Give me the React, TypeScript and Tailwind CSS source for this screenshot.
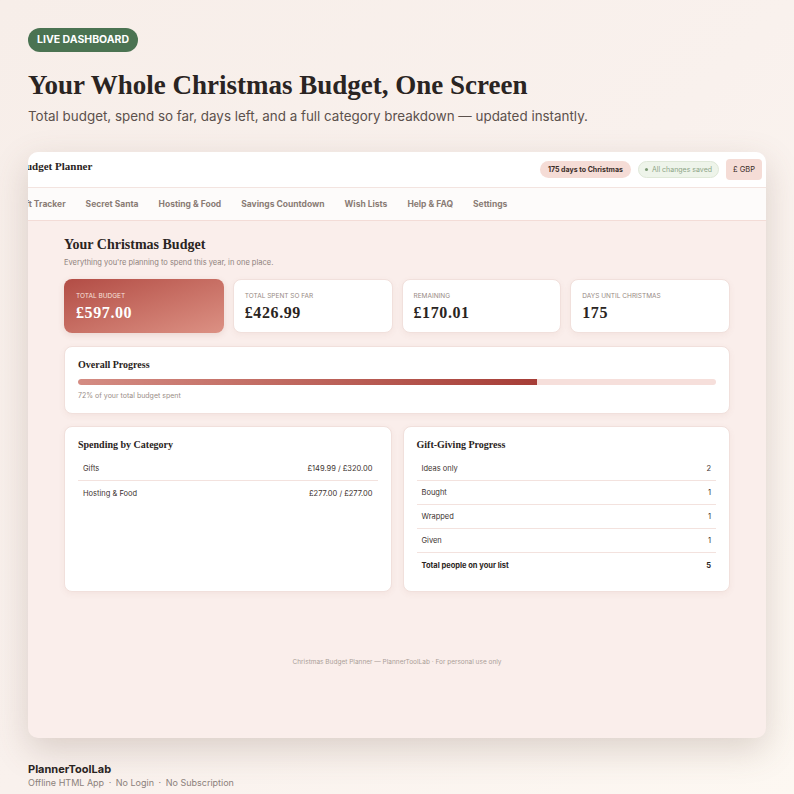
const serif = "font-['Liberation_Serif','DejaVu_Serif',serif]"
const sans = "font-['Inter','Lato',sans-serif]"

const navItems = ["Gift Tracker", "Secret Santa", "Hosting & Food", "Savings Countdown", "Wish Lists", "Help & FAQ", "Settings"]

const stats = [
    { label: "Total spent so far", value: "£426.99" },
    { label: "Remaining", value: "£170.01" },
    { label: "Days until Christmas", value: "175" },
]

const categories = [
    { name: "Gifts", amount: "£149.99 / £320.00" },
    { name: "Hosting & Food", amount: "£277.00 / £277.00" },
]

const giftStatus = [
    { name: "Ideas only", count: 2 },
    { name: "Bought", count: 1 },
    { name: "Wrapped", count: 1 },
    { name: "Given", count: 1 },
]

export default function App() {
    const spentPct = 72

    return (
        <div className={`${sans} w-[794px] h-[794px] overflow-hidden bg-gradient-to-br from-[#f7eee9] via-[#f9f1ed] to-[#fdf8f2] px-7 pt-7 text-[#2b2522]`}>
            {/* Intro */}
            <div className="flex h-6 w-fit items-center rounded-full bg-[#4b7352] px-[9px] text-[10.5px] font-bold text-white">
                LIVE DASHBOARD
            </div>
            <h1 className={`${serif} mt-[16px] text-[27px] font-bold leading-[34px] text-[#2a2422]`}>
                Your Whole Christmas Budget, One Screen
            </h1>
            <p className="mt-[4px] text-[13.4px] leading-5 text-[#5c514c]">
                Total budget, spend so far, days left, and a full category breakdown — updated instantly.
            </p>

            {/* App preview */}
            <div className="mt-[26px] h-[586px] w-[738px] overflow-hidden rounded-[10px] bg-[#faeeeb] shadow-[0_12px_34px_rgba(110,80,70,0.22)]">
                <header className="flex h-9 items-center justify-between border-b border-[#f3e4e0] bg-white pr-1">
                    <div className="-ml-[61px] flex flex-col">
                        <span className={`${serif} text-[11px] font-bold leading-3 text-[#2a2422]`}>Christmas Budget Planner</span>
                        <span className="text-[5px] leading-[8px] text-[#9a8d87]">by PlannerToolLab</span>
                    </div>
                    <div className="flex items-center gap-[7px]">
                        <span className="rounded-full bg-[#f5dcd6] px-[8px] py-[4px] text-[7px] font-bold leading-[9px] text-[#3a2c28]">
                            175 days to Christmas
                        </span>
                        <span className="flex items-center gap-[4px] rounded-full border border-[#dfe8d8] bg-[#eef4ea] px-[6px] py-[3px] text-[7px] leading-[9px] text-[#8da487]">
                            <span className="h-[3px] w-[3px] rounded-full bg-[#7d9a76]" />
                            All changes saved
                        </span>
                        <span className="rounded-[4px] bg-[#f5dcd6] px-[7px] py-[6px] text-[7.5px] leading-[9px] text-[#3a2c28]">
                            £ GBP
                        </span>
                    </div>
                </header>

                <nav className="flex h-[33px] items-center gap-[20px] border-b border-[#f3dcd7] bg-[#fdfbfa] text-[8.5px] font-bold text-[#8a7c75]">
                    <span className="-ml-[11px]">Gift Tracker</span>
                    {navItems.slice(1).map((item) => (
                        <span key={item}>{item}</span>
                    ))}
                </nav>

                <main className="px-9 pt-4">
                    <h2 className={`${serif} text-[14px] font-bold leading-4 text-[#2a2422]`}>Your Christmas Budget</h2>
                    <p className="mt-[4px] text-[7.5px] text-[#8f827c]">Everything you're planning to spend this year, in one place.</p>

                    {/* Stat cards */}
                    <div className="mt-[11px] grid grid-cols-4 gap-[9px]">
                        <div className="flex h-[54px] flex-col justify-center rounded-[8px] bg-gradient-to-br from-[#b24c45] to-[#dc9184] px-[12px] text-white shadow-[0_2px_6px_rgba(150,80,70,0.15)]">
                            <span className="text-[6.5px] uppercase leading-[8px] text-[#f8e1dc]">Total budget</span>
                            <span className={`${serif} mt-[5px] text-[16px] font-bold leading-[16px] tracking-[0.6px]`}>£597.00</span>
                        </div>
                        {stats.map((s) => (
                            <div key={s.label} className="flex h-[54px] flex-col justify-center rounded-[8px] border border-[#f1e0dc] bg-white px-[11px] shadow-[0_2px_6px_rgba(150,100,90,0.07)]">
                                <span className="text-[6.5px] uppercase leading-[8px] text-[#978a84]">{s.label}</span>
                                <span className={`${serif} mt-[5px] text-[16px] font-bold leading-[16px] tracking-[0.6px] text-[#2a2422]`}>{s.value}</span>
                            </div>
                        ))}
                    </div>

                    {/* Overall progress */}
                    <div className="mt-[13px] h-[68px] rounded-[8px] border border-[#f1e0dc] bg-white px-[13px] pt-[12px] shadow-[0_2px_6px_rgba(150,100,90,0.07)]">
                        <h3 className={`${serif} text-[10px] font-bold leading-3 text-[#2a2422]`}>Overall Progress</h3>
                        <div className="mt-[8px] h-[6px] w-full overflow-hidden rounded-full bg-[#f6dfdb]">
                            <div
                                className="h-full rounded-l-full bg-gradient-to-r from-[#d48c83] to-[#a63d37]"
                                style={{ width: `${spentPct}%` }}
                            />
                        </div>
                        <p className="mt-[6px] text-[7px] text-[#9a8e88]">{spentPct}% of your total budget spent</p>
                    </div>

                    {/* Breakdown panels */}
                    <div className="mt-[12px] grid grid-cols-2 gap-[11px]">
                        <div className="h-[166px] rounded-[8px] border border-[#f1e0dc] bg-white px-[13px] pt-[12px] shadow-[0_2px_6px_rgba(150,100,90,0.07)]">
                            <h3 className={`${serif} text-[10px] font-bold leading-3 text-[#2a2422]`}>Spending by Category</h3>
                            <div className="mt-[6px]">
                                {categories.map((c, i) => (
                                    <div
                                        key={c.name}
                                        className={`flex h-6 items-center justify-between px-[5px] text-[7.5px] text-[#3d3330] ${i < categories.length - 1 ? "border-b border-[#f3e2de]" : ""}`}
                                    >
                                        <span>{c.name}</span>
                                        <span>{c.amount}</span>
                                    </div>
                                ))}
                            </div>
                        </div>

                        <div className="h-[166px] rounded-[8px] border border-[#f1e0dc] bg-white px-[13px] pt-[12px] shadow-[0_2px_6px_rgba(150,100,90,0.07)]">
                            <h3 className={`${serif} text-[10px] font-bold leading-3 text-[#2a2422]`}>Gift-Giving Progress</h3>
                            <div className="mt-[6px]">
                                {giftStatus.map((g) => (
                                    <div key={g.name} className="flex h-6 items-center justify-between border-b border-[#f3e2de] px-[5px] text-[7.5px] text-[#3d3330]">
                                        <span>{g.name}</span>
                                        <span>{g.count}</span>
                                    </div>
                                ))}
                                <div className="flex h-6 items-center justify-between px-[5px] text-[7.5px] font-bold text-[#2a2422]">
                                    <span>Total people on your list</span>
                                    <span>5</span>
                                </div>
                            </div>
                        </div>
                    </div>

                    <p className="mt-[66px] text-center text-[6.5px] text-[#aa9e98]">
                        Christmas Budget Planner — PlannerToolLab · For personal use only
                    </p>
                </main>
            </div>

            {/* Brand footer */}
            <div className="mt-[24px]">
                <p className="text-[11px] font-bold leading-[14px] text-[#2a2422]">PlannerToolLab</p>
                <p className="text-[9px] leading-[14px] text-[#8c817b]">
                    Offline HTML App <span className="mx-[2px]">·</span> No Login <span className="mx-[2px]">·</span> No Subscription
                </p>
            </div>
        </div>
    )
}
